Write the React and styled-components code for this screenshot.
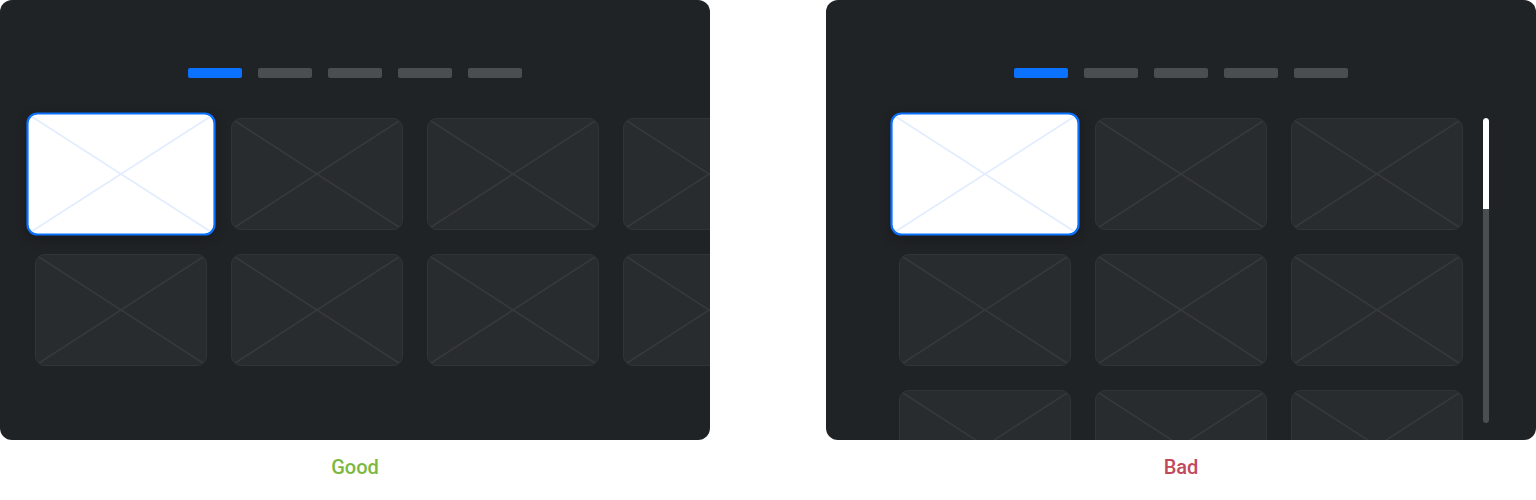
import styled, { createGlobalStyle } from "styled-components"

const GlobalStyle = createGlobalStyle`
  html, body {
    margin: 0;
    padding: 0;
    background: #ffffff;
  }
  * {
    box-sizing: border-box;
    font-family: 'Roboto', 'Liberation Sans', sans-serif;
  }
`

const Page = styled.div`
  display: flex;
  gap: 116px;
  width: 1536px;
`

const Figure = styled.div`
  display: flex;
  flex-direction: column;
  align-items: center;
  width: 710px;
`

const Panel = styled.div`
  position: relative;
  width: 710px;
  height: 440px;
  background: #202326;
  border-radius: 12px;
  overflow: hidden;
  padding-top: 68px;
`

const Tabs = styled.div`
  display: flex;
  justify-content: center;
  gap: 16px;
`

const Tab = styled.div`
  width: 54px;
  height: 10px;
  border-radius: 2px;
  background: ${(p) => (p.$active ? "#0a72ff" : "#4a4e51")};
`

const Grid = styled.div`
  display: grid;
  grid-template-columns: repeat(${(p) => p.$cols}, 172px);
  grid-auto-rows: 112px;
  gap: 24px;
  margin-top: 40px;
  padding-left: ${(p) => (p.$centered ? "0" : "35px")};
  justify-content: ${(p) => (p.$centered ? "center" : "start")};
`

const Card = styled.div`
  width: 172px;
  height: 112px;
  border-radius: 10px;
  overflow: hidden;
  background: ${(p) => (p.$selected ? "#ffffff" : "#292c2f")};
  border: ${(p) => (p.$selected ? "2px solid #0a72ff" : "1.5px solid #323538")};
  transform: ${(p) => (p.$selected ? "scale(1.1)" : "none")};
  box-shadow: ${(p) => (p.$selected ? "0 3px 10px rgba(0,0,0,0.25)" : "none")};
  position: relative;
  z-index: ${(p) => (p.$selected ? 1 : 0)};

  svg {
    display: block;
    width: 100%;
    height: 100%;
  }
`

const Scrollbar = styled.div`
  position: absolute;
  left: 657px;
  top: 118px;
  width: 6px;
  height: 305px;
  border-radius: 3px;
  background: #4a4e51;
  overflow: hidden;
`

const Thumb = styled.div`
  height: 91px;
  background: #ffffff;
  border-radius: 3px 3px 0 0;
`

const Caption = styled.div`
  margin-top: 15px;
  font-size: 20px;
  line-height: 24px;
  font-weight: 500;
  color: ${(p) => p.$color};
`

function Placeholder({ selected }) {
  const stroke = selected ? "#e1edfe" : "#36393d"
  return (
    <Card $selected={selected}>
      <svg viewBox="0 0 100 100" preserveAspectRatio="none">
        <line x1="0" y1="0" x2="100" y2="100" stroke={stroke} strokeWidth="1.6" vectorEffect="non-scaling-stroke" />
        <line x1="100" y1="0" x2="0" y2="100" stroke={stroke} strokeWidth="1.6" vectorEffect="non-scaling-stroke" />
      </svg>
    </Card>
  )
}

function TabRow() {
  return (
    <Tabs>
      {[0, 1, 2, 3, 4].map((i) => (
        <Tab key={i} $active={i === 0} />
      ))}
    </Tabs>
  )
}

export default function App() {
  return (
    <Page>
      <GlobalStyle />
      <Figure>
        <Panel>
          <TabRow />
          <Grid $cols={4}>
            {Array.from({ length: 8 }).map((_, i) => (
              <Placeholder key={i} selected={i === 0} />
            ))}
          </Grid>
        </Panel>
        <Caption $color="#7cb83f">Good</Caption>
      </Figure>
      <Figure>
        <Panel>
          <TabRow />
          <Grid $cols={3} $centered>
            {Array.from({ length: 9 }).map((_, i) => (
              <Placeholder key={i} selected={i === 0} />
            ))}
          </Grid>
          <Scrollbar>
            <Thumb />
          </Scrollbar>
        </Panel>
        <Caption $color="#c2485b">Bad</Caption>
      </Figure>
    </Page>
  )
}
